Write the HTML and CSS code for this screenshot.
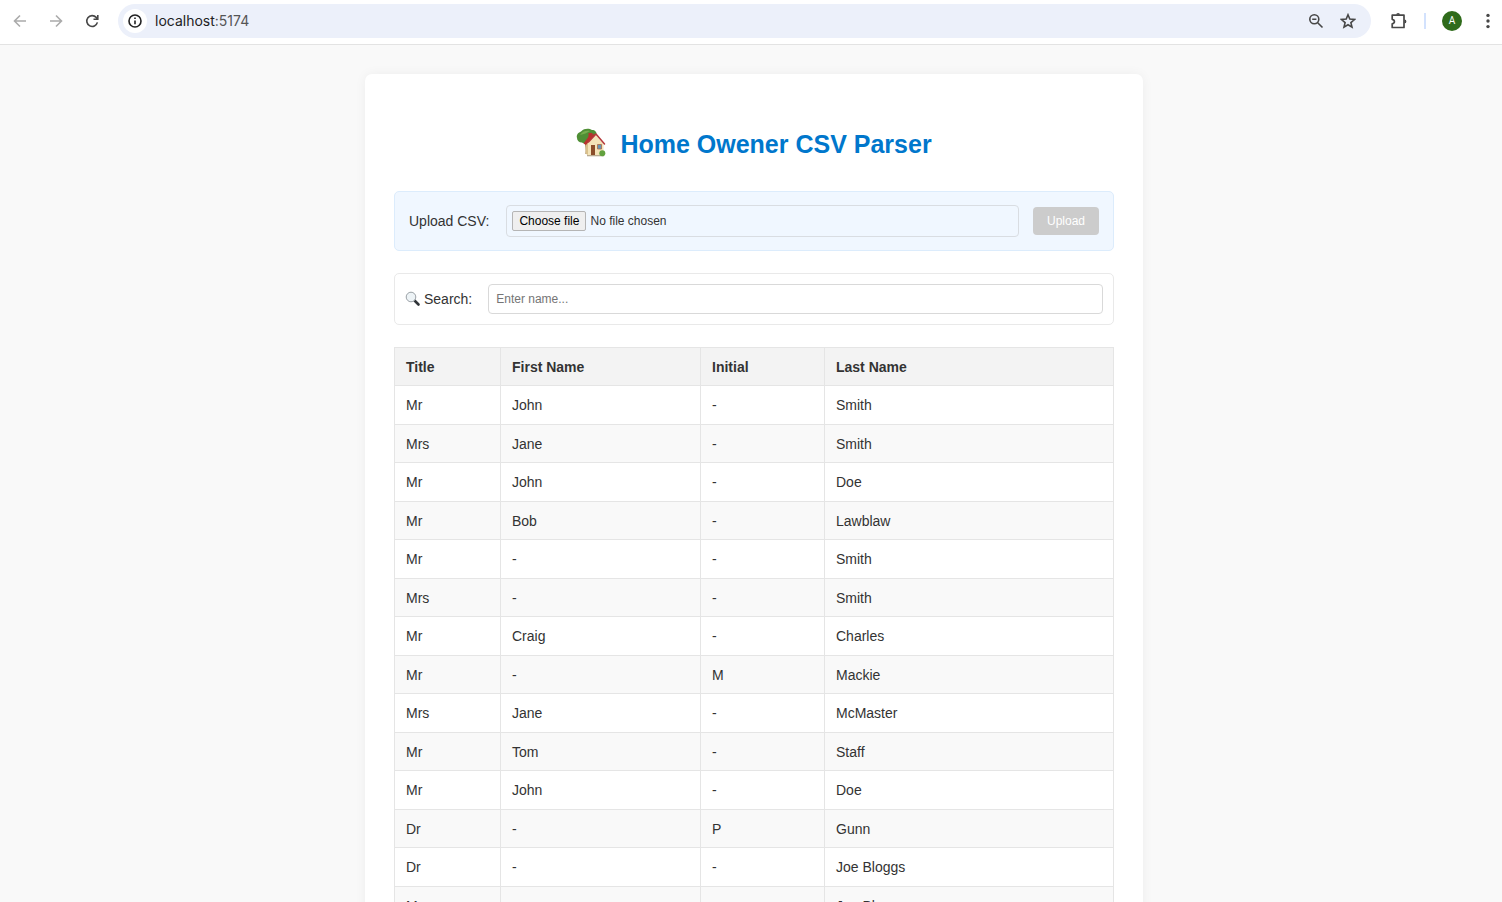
FILE: index.html
```html
<!DOCTYPE html>
<html lang="en-GB">
<head>
<meta charset="utf-8">
<title>Home Owener CSV Parser</title>
<link rel="stylesheet" href="styles.css">
</head>
<body>
<header class="toolbar">
  <button class="nav-btn muted" type="button" aria-label="Back"><svg viewBox="0 0 16 16"><path d="M14 8H3M8 2.500L2.500 8 8 13.500"/></svg></button>
  <button class="nav-btn muted" type="button" aria-label="Forward"><svg viewBox="0 0 16 16"><path d="M2 8h11M8 2.500L13.500 8 8 13.500"/></svg></button>
  <button class="nav-btn" type="button" aria-label="Reload"><svg viewBox="0 0 16 16"><path d="M13.4 9.4A5.4 5.4 0 1 1 12.2 4.4L13.6 6M13.8 2v4.3H9.5"/></svg></button>
  <div class="omnibox">
    <button class="site-info" type="button" aria-label="Site information"><svg viewBox="0 0 16 16"><circle cx="8" cy="8" r="6"/><path d="M8 7.4v3.8M8 4.6v1.5"/></svg></button>
    <div class="url">localhost<span class="port">:5174</span></div>
    <button class="omni-btn" type="button" aria-label="Zoom"><svg viewBox="0 0 16 16"><circle cx="6.3" cy="6.3" r="4.5"/><path d="M9.7 9.7l4.8 4.8M4.2 6.3h4.2"/></svg></button>
    <button class="omni-btn" type="button" aria-label="Bookmark"><svg viewBox="0 0 16 16"><path d="M8 1.8l1.8 4.3 4.7.4-3.6 3.1 1.1 4.6L8 11.8l-4 2.4 1.1-4.6-3.6-3.1 4.7-.4z"/></svg></button>
  </div>
  <button class="ext-btn" type="button" aria-label="Extensions"><svg viewBox="0 0 18 18"><path stroke-linejoin="round" d="M2.200 3.200h11.800v12.300H2.200v-3.600c1.500-.3 2.200-1.200 2.200-2.300s-.7-2-2.200-2.300z"/><path class="knob" d="M6.200 2.800a1.900 1.900 0 0 1 3.800 0zM14.500 7.500a1.900 1.900 0 0 1 0 3.800z"/></svg></button>
  <span class="divider"></span>
  <button class="avatar" type="button">A</button>
  <button class="menu-btn" type="button" aria-label="Menu"><svg viewBox="0 0 16 16"><circle cx="8" cy="2.4" r="1.7"/><circle cx="8" cy="8" r="1.7"/><circle cx="8" cy="13.6" r="1.7"/></svg></button>
</header>
<main class="viewport">
  <div class="card">
    <h1 class="heading">
      <svg class="house" viewBox="0 0 30 30" aria-hidden="true">
        <path fill="#7a5a35" d="M8 13h4v13H9.500c.8-4 0-9-1.500-13z"/>
        <path fill="#4f8f35" d="M1 10C0 6.500 2.500 4.500 5 3.500 8 .3 13 .3 16 2c3 0 5 2 4.500 5 0 4-3 6-6.500 7-2 2-6 2-8 .5C3 14.500 1 12.500 1 10z"/>
        <path fill="#75ad4d" d="M4 7c2-3.500 6-5 10-4-3 2-6 3-10 4z"/>
        <path fill="#b8322e" d="M12.500 5h4v5h-4z"/>
        <path fill="#d9c08b" d="M9.500 15l3-4v16.500l-3-2z"/>
        <path fill="#f3e3b8" d="M12 14l7.500-7.500L27.500 16v11.500H12z"/>
        <path fill="#b8322e" d="M7.500 15.500L13 8l6.500-2.500-7 8.500-2.500 3z"/>
        <path fill="none" stroke="#b5383a" stroke-width="1.500" stroke-linecap="round" stroke-linejoin="round" d="M12.500 14L20 6l8.500 10"/>
        <path fill="#8b4e2b" d="M15 17h4v10.500h-4z"/>
        <path fill="#6597b8" stroke="#ad6a46" stroke-width=".8" d="M21.500 16.500h4V21h-4z"/>
        <path fill="#b9ab90" d="M11 27h17v1.300H11z"/>
        <circle cx="26.300" cy="25.300" r="3" fill="#62a13e"/>
      </svg>
      <span>Home Owener CSV Parser</span>
    </h1>
    <form class="panel upload">
      <label class="upload-label" for="csv">Upload CSV:</label>
      <div class="file-field">
        <span class="file-button">Choose file</span>
        <span>No file chosen</span>
        <input class="file-input" id="csv" type="file" accept=".csv">
      </div>
      <button class="upload-btn" type="submit" disabled>Upload</button>
    </form>
    <div class="panel search">
      <label class="search-label" for="name">
        <svg class="lens" viewBox="0 0 16 16" aria-hidden="true"><path d="M9.500 9.500l4 4" stroke="#303438" stroke-width="2.600" stroke-linecap="round"/><circle cx="6" cy="6" r="4.800" fill="#edf3f6" stroke="#9ba1a6"/></svg>
        Search:
      </label>
      <input class="search-input" id="name" type="text" placeholder="Enter name...">
    </div>
    <table class="people">
      <colgroup><col class="c-title"><col class="c-first"><col class="c-initial"><col></colgroup>
      <thead><tr><th>Title</th><th>First Name</th><th>Initial</th><th>Last Name</th></tr></thead>
      <tbody>
        <tr><td>Mr</td><td>John</td><td>-</td><td>Smith</td></tr>
        <tr><td>Mrs</td><td>Jane</td><td>-</td><td>Smith</td></tr>
        <tr><td>Mr</td><td>John</td><td>-</td><td>Doe</td></tr>
        <tr><td>Mr</td><td>Bob</td><td>-</td><td>Lawblaw</td></tr>
        <tr><td>Mr</td><td>-</td><td>-</td><td>Smith</td></tr>
        <tr><td>Mrs</td><td>-</td><td>-</td><td>Smith</td></tr>
        <tr><td>Mr</td><td>Craig</td><td>-</td><td>Charles</td></tr>
        <tr><td>Mr</td><td>-</td><td>M</td><td>Mackie</td></tr>
        <tr><td>Mrs</td><td>Jane</td><td>-</td><td>McMaster</td></tr>
        <tr><td>Mr</td><td>Tom</td><td>-</td><td>Staff</td></tr>
        <tr><td>Mr</td><td>John</td><td>-</td><td>Doe</td></tr>
        <tr><td>Dr</td><td>-</td><td>P</td><td>Gunn</td></tr>
        <tr><td>Dr</td><td>-</td><td>-</td><td>Joe Bloggs</td></tr>
        <tr><td>Mrs</td><td>-</td><td>-</td><td>Joe Bloggs</td></tr>
      </tbody>
    </table>
  </div>
</main>
</body>
</html>
```
FILE: styles.css
```css
* { box-sizing: border-box; }
body {
  margin: 0;
  height: 100vh;
  display: flex;
  flex-direction: column;
  overflow: hidden;
  background: #f9f9f9;
  color: #333;
  font: 14px/18px "Liberation Sans", Arial, sans-serif;
}
button { border: 0; padding: 0; background: none; font: inherit; color: inherit; }
svg { display: block; flex: none; }

.toolbar {
  flex: none;
  display: flex;
  align-items: center;
  padding: 4px 6px 6px 12px;
  background: #fff;
  border-bottom: 1px solid #e3e3e3;
  color: #474747;
}
.toolbar svg { width: 16px; height: 16px; fill: none; stroke: currentColor; stroke-width: 1.6; }
.nav-btn { width: 16px; margin-right: 20px; }
.nav-btn.muted { color: #ababab; }
.omnibox {
  flex: 1;
  display: flex;
  align-items: center;
  height: 34px;
  margin-left: -2px;
  padding: 0 15px 0 5px;
  border-radius: 17px;
  background: #ecf0fa;
}
.site-info {
  display: grid;
  place-items: center;
  width: 24px;
  height: 24px;
  border-radius: 50%;
  background: #fff;
  color: #222;
}
.url { flex: 1; margin-left: 8px; font: 14px/18px Inter, Roboto, sans-serif; color: #222; }
.port { color: #555; }
.omni-btn { margin-left: 16px; }
.ext-btn { margin: 0 16px 0 19px; }
.toolbar .ext-btn svg { width: 18px; height: 18px; stroke-width: 1.7; }
.toolbar .knob { fill: currentColor; stroke: none; }
.divider { width: 2px; height: 16px; background: #d3e2fd; }
.avatar {
  width: 20px;
  height: 20px;
  margin: 0 18px 0 16px;
  border-radius: 50%;
  background: #2f6b1b;
  color: #fff;
  font: 10px/20px Roboto, sans-serif;
}
.toolbar .menu-btn svg { fill: currentColor; stroke: none; }

.viewport { flex: 1; min-height: 0; overflow: hidden; padding: 29px 0 0 6px; }
.card {
  max-width: 778px;
  margin: 0 auto;
  padding: 29px;
  border-radius: 7px;
  background: #fff;
  box-shadow: 0 0 12px rgba(0, 0, 0, .05);
}
.heading {
  display: flex;
  justify-content: center;
  align-items: center;
  gap: 14px;
  margin: 25px 0 31px;
  color: #0077cc;
  font-size: 25px;
  line-height: 32px;
}
.house { width: 30px; height: 30px; margin-bottom: 2px; }
.panel {
  display: flex;
  align-items: center;
  gap: 14px;
  margin-bottom: 22px;
  border: 1px solid #e9e9e9;
  border-radius: 5px;
}
.upload { padding: 13px 14px; background: #f0f7ff; border-color: #dcecfc; }
.upload-label { padding-right: 3px; }
.file-field {
  position: relative;
  flex: 1;
  display: flex;
  align-items: center;
  gap: 4px;
  height: 32px;
  padding: 0 5px;
  border: 1px solid #d9dde2;
  border-radius: 4px;
  font-size: 12px;
}
.file-button {
  padding: 0 6px;
  border: 1px solid #b5b5b5;
  border-radius: 2px;
  background: #efefef;
  color: #000;
}
.file-input { position: absolute; inset: 0; width: 100%; opacity: 0; }
.upload-btn {
  padding: 5px 14px;
  border-radius: 4px;
  background: #ccc;
  color: #fff;
  font-size: 12px;
}
.search { padding: 10px; }
.search-label { display: flex; align-items: center; gap: 3px; padding-right: 2px; }
.lens { width: 16px; height: 16px; }
.search-input {
  flex: 1;
  height: 30px;
  padding: 0 7px;
  border: 1px solid #d9d9d9;
  border-radius: 4px;
  background: #fff;
  color: #333;
  font: 12px/18px "Liberation Sans", Arial, sans-serif;
}
.search-input::placeholder { color: #757575; }

.people { width: 100%; table-layout: fixed; border-collapse: collapse; }
.c-title { width: 106px; }
.c-first { width: 200px; }
.c-initial { width: 124px; }
.people th, .people td {
  height: 39px;
  padding: 0 11px;
  border: 1px solid #e5e5e5;
  text-align: left;
}
.people th { height: 38px; background: #f3f3f3; }
.people tbody tr:nth-child(even) { background: #f9f9f9; }
.people tbody tr:nth-child(even) td { height: 38px; }
```
